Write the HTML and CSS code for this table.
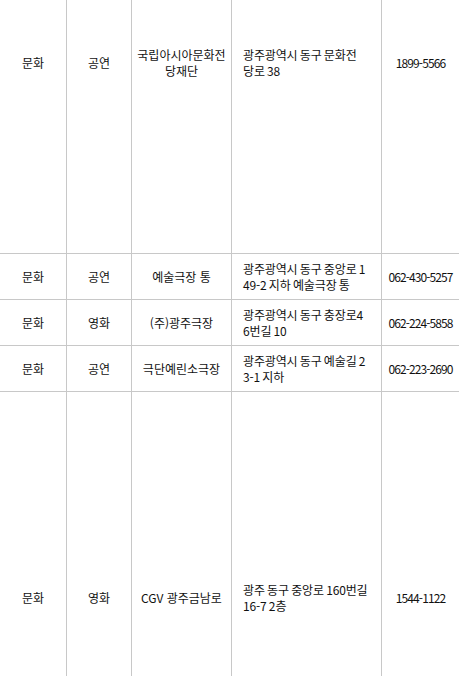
FILE: index.html
```html
<!DOCTYPE html>
<html lang="ko">
<head>
<meta charset="utf-8">
<title>문화시설 목록</title>
<link rel="stylesheet" href="styles.css">
</head>
<body>
<table class="list">
  <colgroup>
    <col class="c-cat">
    <col class="c-type">
    <col class="c-name">
    <col class="c-addr">
    <col class="c-tel">
  </colgroup>
  <tbody>
    <tr class="row-top">
      <td>문화</td>
      <td>공연</td>
      <td>국립아시아문화전<br>당재단</td>
      <td class="addr">광주광역시 동구 문화전<br>당로 38</td>
      <td class="tel">1899-5566</td>
    </tr>
    <tr class="row">
      <td>문화</td>
      <td>공연</td>
      <td>예술극장 통</td>
      <td class="addr">광주광역시 동구 중앙로 1<br>49-2 지하 예술극장 통</td>
      <td class="tel">062-430-5257</td>
    </tr>
    <tr class="row">
      <td>문화</td>
      <td>영화</td>
      <td>(주)광주극장</td>
      <td class="addr">광주광역시 동구 충장로4<br>6번길 10</td>
      <td class="tel">062-224-5858</td>
    </tr>
    <tr class="row">
      <td>문화</td>
      <td>공연</td>
      <td>극단예린소극장</td>
      <td class="addr">광주광역시 동구 예술길 2<br>3-1 지하</td>
      <td class="tel">062-223-2690</td>
    </tr>
    <tr class="row-bottom">
      <td>문화</td>
      <td>영화</td>
      <td>CGV 광주금남로</td>
      <td class="addr">광주 동구 중앙로 160번길<br>16-7 2층</td>
      <td class="tel">1544-1122</td>
    </tr>
  </tbody>
</table>
</body>
</html>
```
FILE: styles.css
```css
html, body {
  margin: 0;
  padding: 0;
  background: #fff;
}

body {
  font-family: "Noto Sans CJK KR", "Malgun Gothic", sans-serif;
  font-size: 12px;
  color: #111;
}

.list {
  width: 459px;
  table-layout: fixed;
  border-collapse: separate;
  border-spacing: 0;
}

.c-cat { width: 67px; }
.c-type { width: 65px; }
.c-name { width: 100px; }
.c-addr { width: 150px; }
.c-tel { width: 77px; }

.list td {
  box-sizing: border-box;
  padding: 0 4px;
  border-right: 1px solid #c8c8c8;
  border-bottom: 1px solid #c8c8c8;
  text-align: center;
  vertical-align: middle;
  line-height: 16px;
  white-space: nowrap;
  overflow: hidden;
}

.list td:last-child {
  border-right: 0;
}

.list td.addr {
  text-align: left;
  padding: 0 4px 0 11px;
  word-spacing: -0.9px;
  letter-spacing: -0.15px;
}

.list td.tel {
  padding: 0 2px;
  letter-spacing: -0.9px;
}

.row-top {
  height: 254px;
}

.row-top td,
.row-top td.addr,
.row-top td.tel {
  padding-bottom: 128px;
}

.row {
  height: 46px;
}

.row-bottom {
  height: 412px;
}
```
